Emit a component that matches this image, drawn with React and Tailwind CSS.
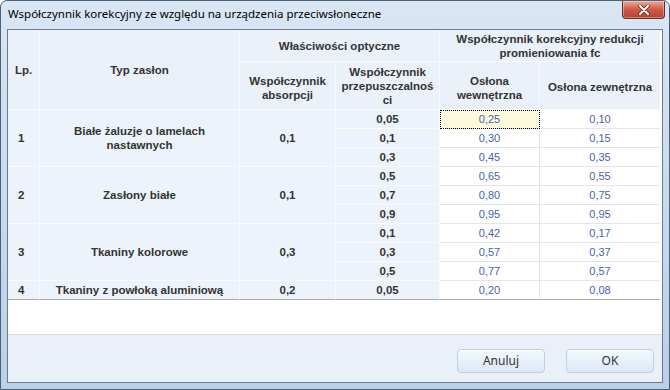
const groups = [
  {
    lp: '1',
    typ: ['Białe żaluzje o lamelach', 'nastawnych'],
    abs: '0,1',
    rows: [['0,05', '0,25', '0,10'], ['0,1', '0,30', '0,15'], ['0,3', '0,45', '0,35']],
  },
  {
    lp: '2',
    typ: ['Zasłony białe'],
    abs: '0,1',
    rows: [['0,5', '0,65', '0,55'], ['0,7', '0,80', '0,75'], ['0,9', '0,95', '0,95']],
  },
  {
    lp: '3',
    typ: ['Tkaniny kolorowe'],
    abs: '0,3',
    rows: [['0,1', '0,42', '0,17'], ['0,3', '0,57', '0,37'], ['0,5', '0,77', '0,57']],
  },
  {
    lp: '4',
    typ: ['Tkaniny z powłoką aluminiową'],
    abs: '0,2',
    rows: [['0,05', '0,20', '0,08']],
  },
];

const ui = { fontFamily: '"Noto Sans", "Liberation Sans", sans-serif' };
const grid = { fontFamily: '"Liberation Sans", Arial, sans-serif' };

const head = 'bg-[#ebf1f9] border-r border-b border-[#f8fbfe] flex items-center justify-center text-center font-bold text-[11.5px] leading-[14px] text-[#333]';

function Group({ g, last }) {
  const span = g.rows.length === 3 ? 'row-span-3' : 'row-span-1';
  const paleB = last ? 'border-b-[#a9a9a9]' : 'border-b-[#f8fbfe]';
  const whiteB = last ? 'border-b-[#a9a9a9]' : 'border-b-[#e5e5e5]';
  const pale = `bg-[#edf3fa] border-r border-b border-r-[#f8fbfe] ${paleB} flex items-center font-bold text-[11.5px] leading-[14px] text-[#333]`;
  return (
    <>
      <div className={`${span} ${pale} pl-[10px]`}>{g.lp}</div>
      <div className={`${span} ${pale} justify-center text-center`}>
        <div>{g.typ.map((t) => <div key={t}>{t}</div>)}</div>
      </div>
      <div className={`${span} ${pale} justify-center`}>{g.abs}</div>
      {g.rows.map((r, i) => {
        const sel = g.lp === '1' && i === 0;
        return (
          <div key={i} className="contents">
            <div className={`${pale} justify-center`}>{r[0]}</div>
            <div
              className={`border-r border-b border-r-[#e5e5e5] ${whiteB} flex items-center justify-center text-[11px] text-[#4a62ad] ${
                sel ? 'bg-[#fdf9dc] outline-1 outline-dotted outline-black -outline-offset-1' : 'bg-white'
              }`}
            >
              {r[1]}
            </div>
            <div className={`border-b ${whiteB} bg-white flex items-center justify-center text-[11px] text-[#4a62ad]`}>{r[2]}</div>
          </div>
        );
      })}
    </>
  );
}

export default function App() {
  return (
    <div className="w-[670px] h-[390px] flex flex-col border border-[#4c6076] rounded-t-[7px] overflow-hidden bg-gradient-to-b from-[#d9e6f4] via-[#c8dbef] to-[#b9d0e9]">
      {/* title bar */}
      <div className="h-[28px] shrink-0 flex items-start">
        <span className="pl-[7px] pt-[5px] text-[11.5px] leading-[16px] text-black" style={ui}>
          Współczynnik korekcyjny ze względu na urządzenia przeciwsłoneczne
        </span>
        <button className="ml-auto mr-[4px] w-[43px] h-[18px] rounded-b-[4px] border border-t-0 border-[#6e2a22] bg-gradient-to-b from-[#e9a99b] via-[#cf5a48] to-[#b8402f] flex items-center justify-center shadow-[inset_0_0_0_1px_rgba(255,255,255,0.35)]">
          <svg width="12" height="10" viewBox="0 0 12 10">
            <path d="M2 1 L10 9 M10 1 L2 9" stroke="#5a1e17" strokeWidth="3.4" strokeLinecap="round" />
            <path d="M2 1 L10 9 M10 1 L2 9" stroke="#fff" strokeWidth="2" strokeLinecap="round" />
          </svg>
        </button>
      </div>

      {/* client area */}
      <div className="mx-[6px] flex-1 flex flex-col border border-[#6b7a8c] bg-white">
        <div className="flex-1 bg-white">
          <div
            className="w-[652px] grid grid-cols-[32px_200px_96px_104px_100px_120px] grid-rows-[32px_48px_repeat(10,19px)] border-r border-[#a9a9a9]"
            style={grid}
          >
            <div className={`row-span-2 ${head}`}>Lp.</div>
            <div className={`row-span-2 ${head}`}>Typ zasłon</div>
            <div className={`col-span-2 ${head}`}>Właściwości optyczne</div>
            <div className={`col-span-2 ${head} border-r-0`}>
              Współczynnik korekcyjny redukcji
              <br />
              promieniowania fc
            </div>
            <div className={`${head} pt-[4px]`}>
              Współczynnik
              <br />
              absorpcji
            </div>
            <div className={head}>
              Współczynnik
              <br />
              przepuszczalnoś
              <br />
              ci
            </div>
            <div className={`${head} pt-[4px]`}>
              Osłona
              <br />
              wewnętrzna
            </div>
            <div className={`${head} pt-[2px] border-r-0`}>Osłona zewnętrzna</div>
            {groups.map((g, i) => (
              <Group key={g.lp} g={g} last={i === groups.length - 1} />
            ))}
          </div>
        </div>

        {/* button strip */}
        <div className="h-[48px] shrink-0 border-t border-[#d5dce5] bg-[#eaf0f8] flex items-start justify-end gap-[21px] pt-[14px] pr-[8px]">
          {['Anuluj', 'OK'].map((t) => (
            <button
              key={t}
              className="w-[88px] h-[24px] rounded-[4px] border border-[#bcd0e6] bg-gradient-to-b from-[#f3f8fd] to-[#dce8f6] text-[12px] text-[#333] shadow-[inset_0_1px_0_rgba(255,255,255,0.9)]"
              style={ui}
            >
              {t}
            </button>
          ))}
        </div>
      </div>

      <div className="h-[6px] shrink-0" />
    </div>
  );
}
